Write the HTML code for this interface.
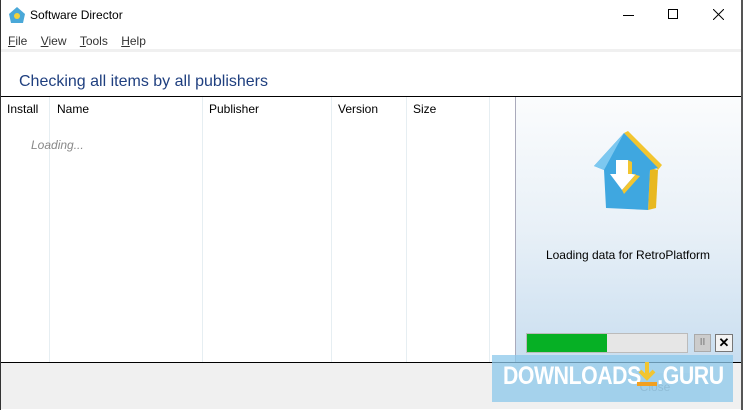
<!DOCTYPE html>
<html><head><meta charset="utf-8"><style>
*{margin:0;padding:0;box-sizing:border-box}
body{width:743px;height:410px;overflow:hidden;background:#fff;font-family:"Segoe UI","Liberation Sans",sans-serif;font-size:12px;color:#000;position:relative}
.a{position:absolute}
</style></head><body>
<div class="a" style="left:0;top:0;width:1px;height:410px;background:#333"></div>
<div class="a" style="left:741px;top:0;width:2px;height:410px;background:#555"></div>
<svg class="a" style="left:8px;top:6px" width="18" height="18" viewBox="0 0 18 18"><path d="M9 1 L17 8 L15 17 L3 17 L1 8Z" fill="#4aa8d8"/><circle cx="9" cy="10" r="3" fill="#f3d23a"/></svg>
<div class="a" style="left:30px;top:8px;font-size:12px">Software Director</div>
<div class="a" style="left:623px;top:15px;width:11px;height:1px;background:#000"></div>
<div class="a" style="left:668px;top:9px;width:10px;height:10px;border:1px solid #000"></div>
<svg class="a" style="left:713px;top:9px" width="11" height="11"><path d="M0 0L11 11M11 0L0 11" stroke="#000" stroke-width="1"/></svg>
<div class="a" style="left:8px;top:34px;color:#333"><u>F</u>ile&nbsp;&nbsp;&nbsp;&nbsp;<u>V</u>iew&nbsp;&nbsp;&nbsp;&nbsp;<u>T</u>ools&nbsp;&nbsp;&nbsp;&nbsp;<u>H</u>elp</div>
<div class="a" style="left:1px;top:49px;width:740px;height:3px;background:#f0f0f0"></div>
<div class="a" style="left:19px;top:73px;font-size:16px;color:#1f3f7f">Checking all items by all publishers</div>
<div class="a" style="left:1px;top:96px;width:740px;height:1px;background:#000"></div>
<div class="a" style="left:49px;top:97px;width:1px;height:266px;background:#e6eef2"></div>
<div class="a" style="left:202px;top:97px;width:1px;height:266px;background:#e6eef2"></div>
<div class="a" style="left:331px;top:97px;width:1px;height:266px;background:#e6eef2"></div>
<div class="a" style="left:406px;top:97px;width:1px;height:266px;background:#e6eef2"></div>
<div class="a" style="left:489px;top:97px;width:1px;height:266px;background:#e6eef2"></div>
<div class="a" style="left:7px;top:102px">Install</div>
<div class="a" style="left:57px;top:102px">Name</div>
<div class="a" style="left:209px;top:102px">Publisher</div>
<div class="a" style="left:338px;top:102px">Version</div>
<div class="a" style="left:413px;top:102px">Size</div>
<div class="a" style="left:31px;top:138px;font-style:italic;color:#888">Loading...</div>
<div class="a" style="left:515px;top:97px;width:226px;height:266px;border-left:1px solid #aab;background:linear-gradient(#fbfcfd,#e8f0f7 50%,#c9def0)"></div>
<svg class="a" style="left:590px;top:130px" width="75" height="82" viewBox="0 0 75 82">
<path d="M34 3 L38 1 L72 35 L68 40Z" fill="#f2c530"/>
<path d="M60 38 L68 40 L66 78 L58 80Z" fill="#e8b820"/>
<path d="M34 3 L68 38 L60 40 L58 80 L16 78 L14 40 L4 36Z" fill="#3fa7e0"/>
<path d="M34 3 L4 36 L14 40Z" fill="#7cc8f0"/>
<path d="M26 30 L38 30 L38 44 L46 44 L32 60 L20 44 L26 44Z" fill="#fff"/>
<path d="M38 30 L42 32 L42 44 L50 46 L34 64 L32 60 L46 44 L38 44Z" fill="#f2c530"/>
</svg>
<div class="a" style="left:516px;top:248px;width:224px;text-align:center">Loading data for RetroPlatform</div>
<div class="a" style="left:526px;top:333px;width:162px;height:20px;background:#e6e6e6;border:1px solid #bbb"></div>
<div class="a" style="left:527px;top:334px;width:80px;height:18px;background:#06b025"></div>
<div class="a" style="left:694px;top:334px;width:17px;height:18px;background:#ccc;border:1px solid #aaa;color:#777;text-align:center;font-size:10px;line-height:16px">II</div>
<div class="a" style="left:715px;top:334px;width:18px;height:18px;background:#f3f3f3;border:1px solid #777;text-align:center;font-weight:bold;font-size:13px;line-height:16px">✕</div>
<div class="a" style="left:1px;top:362px;width:740px;height:1px;background:#000"></div>
<div class="a" style="left:1px;top:363px;width:740px;height:46px;background:#f0f0f0"></div>
<div class="a" style="left:600px;top:373px;width:110px;height:28px;background:#dfe6ec;color:#999;text-align:center;line-height:28px">Close</div>
<div class="a" style="left:492px;top:355px;width:241px;height:47px;background:rgba(140,200,235,0.75)"></div>
<div class="a" style="left:503px;top:362px;font-family:'Liberation Sans',sans-serif;font-weight:bold;font-size:25px;color:#fff;letter-spacing:-0.5px;transform:scaleX(0.85);transform-origin:left">DOWNLOADS&nbsp;&nbsp;&nbsp;.GURU</div>
<svg class="a" style="left:634px;top:361px" width="26" height="28"><path d="M13 1V16M6 10L13 17L20 10" stroke="#f2c530" stroke-width="4" fill="none"/><rect x="3" y="21" width="20" height="4" fill="#f2a020"/></svg>
</body></html>
